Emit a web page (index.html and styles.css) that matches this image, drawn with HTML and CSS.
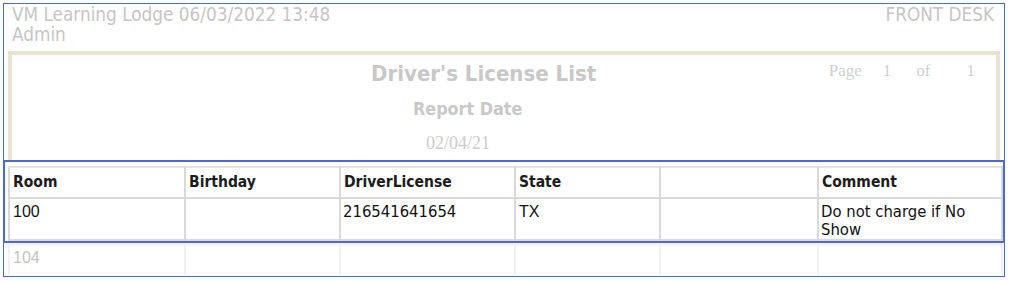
FILE: index.html
```html
<!DOCTYPE html>
<html>
<head>
<meta charset="utf-8">
<link rel="stylesheet" href="styles.css">
</head>
<body>
<div class="frame">
  <div class="top">
    <div class="top-left">VM Learning Lodge 06/03/2022 13:48<br>Admin</div>
    <div class="top-right">FRONT DESK</div>
  </div>
  <div class="report">
    <div class="report-head">
      <div class="titles">
        <div class="title">Driver's License List</div>
        <div class="subtitle">Report Date</div>
        <div class="date">02/04/21</div>
      </div>
      <div class="pageinfo"><span>Page</span><span class="pn">1</span><span class="of">of</span><span class="pt">1</span></div>
    </div>
  </div>
  <div class="selected">
    <table class="grid">
      <colgroup><col class="c1"><col class="c2"><col class="c3"><col class="c4"><col class="c5"><col class="c6"></colgroup>
      <tr class="head">
        <th>Room</th><th>Birthday</th><th>DriverLicense</th><th>State</th><th></th><th>Comment</th>
      </tr>
      <tr class="row">
        <td class="arial">100</td><td></td><td>216541641654</td><td class="arial">TX</td><td></td><td>Do not charge if No Show</td>
      </tr>
    </table>
  </div>
  <table class="grid faded">
    <colgroup><col class="c1"><col class="c2"><col class="c3"><col class="c4"><col class="c5"><col class="c6"></colgroup>
    <tr class="row">
      <td class="arial">104</td><td></td><td></td><td></td><td></td><td></td>
    </tr>
  </table>
</div>
</body>
</html>
```
FILE: styles.css
```css
html, body {
  margin: 0;
  padding: 0;
  background: #ffffff;
}

body {
  font-family: "DejaVu Sans Condensed", "DejaVu Sans", sans-serif;
  font-stretch: condensed;
}

.frame {
  box-sizing: border-box;
  margin: 3px 0 0 3px;
  width: 1002px;
  height: 274px;
  border: 1px solid #4e6ac6;
  overflow: hidden;
}

.top {
  display: flex;
  justify-content: space-between;
  padding: 0 10px 0 8px;
  color: #c6c6c6;
  font-size: 18.8px;
  line-height: 20px;
  height: 40px;
}

.top-left {
  padding-top: 1px;
}

.top-right {
  padding-top: 1px;
}

.report {
  box-sizing: border-box;
  margin: 7px 0 0 4px;
  width: 992px;
  height: 109px;
  border: 4px solid #e7e5d2;
  border-bottom: none;
}

.report-head {
  display: flex;
  align-items: flex-start;
  padding: 6px 0 0 359px;
}

.titles {
  display: flex;
  flex-direction: column;
  align-items: flex-start;
}

.title {
  font-weight: bold;
  font-size: 22px;
  line-height: 26px;
  color: #c8c8c8;
}

.subtitle {
  margin: 11px 0 0 42px;
  font-weight: bold;
  font-size: 17.8px;
  line-height: 22px;
  color: #c8c8c8;
}

.date {
  margin: 12px 0 0 55px;
  font-family: "Liberation Serif", serif;
  font-size: 18px;
  line-height: 22px;
  color: #cccccc;
}

.pageinfo {
  display: flex;
  margin-left: auto;
  margin-right: 21px;
  font-family: "Liberation Serif", serif;
  font-size: 17px;
  line-height: 20px;
  color: #d0d0d0;
}

.pageinfo .pn { margin-left: 21px; }
.pageinfo .of { margin-left: 25px; }
.pageinfo .pt { margin-left: 36px; }

.selected {
  margin: 0 -1px;
  border: 2px solid #4e6ac6;
  padding: 4px 1px 0 3px;
}

.grid {
  border-collapse: collapse;
  table-layout: fixed;
  width: 993px;
}

.c1 { width: 176px; }
.c2 { width: 155px; }
.c3 { width: 175px; }
.c4 { width: 145px; }
.c5 { width: 158px; }
.c6 { width: 184px; }

.grid th,
.grid td {
  border: 2px solid #d9d9d9;
  text-align: left;
  vertical-align: top;
  padding: 4px 3px 0 3px;
}

.grid th {
  padding: 4px 3px 5px 3px;
  font-size: 15.5px;
  line-height: 20px;
  font-weight: bold;
  color: #1c1c1c;
  border-top-color: #e4e4e4;
}

.grid .row td {
  font-size: 16.5px;
  line-height: 18px;
  height: 36px;
  color: #111111;
  padding-left: 2px;
}

.grid .row td.arial {
  font-family: "Liberation Sans", Arial, sans-serif;
  font-stretch: normal;
  font-size: 16px;
  padding-left: 3px;
}

.faded {
  margin-left: 4px;
}

.faded .row td {
  border-color: #f1f1f1;
  border-bottom: none;
  height: 26px;
  color: #c4c4c4;
}
```
